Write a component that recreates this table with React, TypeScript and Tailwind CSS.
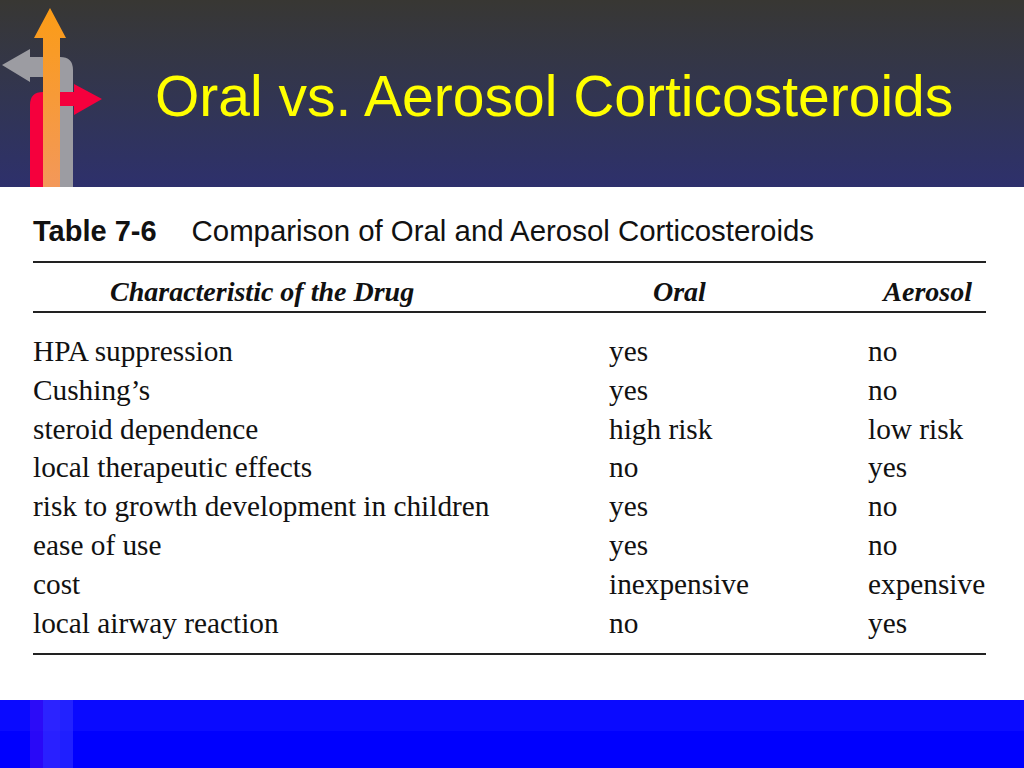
import React from "react";

const rows: [string, string, string][] = [
  ["HPA suppression", "yes", "no"],
  ["Cushing\u2019s", "yes", "no"],
  ["steroid dependence", "high risk", "low risk"],
  ["local therapeutic effects", "no", "yes"],
  ["risk to growth development in children", "yes", "no"],
  ["ease of use", "yes", "no"],
  ["cost", "inexpensive", "expensive"],
  ["local airway reaction", "no", "yes"],
];

function ArrowsLogo() {
  return (
    <svg width="110" height="187" viewBox="0 0 110 187" className="block shrink-0">
      <defs>
        <linearGradient id="org" x1="0" y1="0" x2="0" y2="1">
          <stop offset="0" stopColor="#fb9c16" />
          <stop offset="1" stopColor="#f3985a" />
        </linearGradient>
      </defs>
      {/* gray: left turn */}
      <path
        d="M2 65 L30 49 L30 57 L60 57 Q73 57 73 70 L73 187 L60 187 L60 80 Q60 77 57 77 L30 77 L30 82 Z"
        fill="#9c9ca2"
      />
      {/* red: right turn */}
      <path
        d="M102 99 L74 84 L74 92 L43 92 Q30 92 30 105 L30 187 L43 187 L43 106 L74 106 L74 115 Z"
        fill="#f5003d"
      />
      {/* orange: straight up */}
      <path d="M50 8 L66 38 L60 38 L60 187 L43 187 L43 38 L34 38 Z" fill="url(#org)" />
    </svg>
  );
}

export default function App() {
  return (
    <div className="w-[1024px] h-[768px] flex flex-col bg-white overflow-hidden">
      <header className="h-[187px] flex items-start bg-gradient-to-b from-[#383733] to-[#2e306c]">
        <ArrowsLogo />
        <h1 className="mt-[61px] ml-[45px] text-[57px] leading-[70px] text-[#ffff00] font-['Liberation_Sans',Arial,sans-serif]">
          Oral vs. Aerosol Corticosteroids
        </h1>
      </header>

      <main className="flex-1 flex flex-col pl-[33px] w-[986px] text-[#111]">
        <div className="pt-[28px] flex items-baseline text-[29px] leading-[32px] font-['Liberation_Sans',Arial,sans-serif]">
          <span className="font-bold">Table 7-6</span>
          <span className="ml-[35px] text-[29.4px]">Comparison of Oral and Aerosol Corticosteroids</span>
        </div>
        <div className="mt-[14px] h-[2px] bg-[#222]" />

        <div className="grid grid-cols-[576px_259px_1fr] pt-[13px] pb-[3px] text-[28px] leading-[32px] font-bold italic font-['Liberation_Serif','Times_New_Roman',serif]">
          <span className="pl-[77px]">Characteristic of the Drug</span>
          <span className="pl-[44px]">Oral</span>
          <span className="text-right pr-[14px]">Aerosol</span>
        </div>
        <div className="h-[2px] bg-[#222]" />

        <div className="mt-[19px] flex flex-col text-[29.3px] leading-[38.8px] font-['Liberation_Serif','Times_New_Roman',serif]">
          {rows.map(([c, o, a]) => (
            <div key={c} className="grid grid-cols-[576px_259px_1fr]">
              <span>{c}</span>
              <span>{o}</span>
              <span>{a}</span>
            </div>
          ))}
        </div>
        <div className="mt-[11px] h-[2px] bg-[#222]" />
      </main>

      <footer className="h-[68px] flex flex-col relative">
        <div className="h-[31px] bg-[#0a0aff]" />
        <div className="flex-1 bg-[#0000fe]" />
        <div className="absolute inset-y-0 left-[30px] flex">
          <div className="w-[13px] bg-[#3a0cf4]/70" />
          <div className="w-[17px] bg-[#3a2eff]/70" />
          <div className="w-[13px] bg-[#2c2cff]/70" />
        </div>
      </footer>
    </div>
  );
}
